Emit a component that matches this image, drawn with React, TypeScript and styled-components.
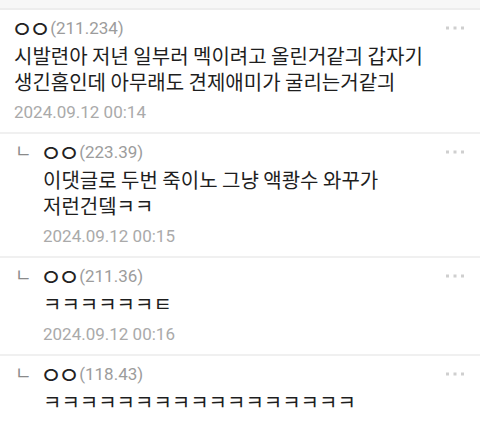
import styled, { createGlobalStyle } from "styled-components";

const GlobalStyle = createGlobalStyle`
  html, body {
    margin: 0;
    padding: 0;
    background: #ffffff;
  }
  body {
    font-family: Roboto, "Noto Sans CJK KR", sans-serif;
    color: #222222;
  }
`;

const TopBand = styled.div`
  height: 8px;
  background: #f7f7f7;
  border-bottom: 2px solid #ededed;
`;

const List = styled.div`
  display: flex;
  flex-direction: column;
`;

const Item = styled.div<{ $reply?: boolean }>`
  display: flex;
  padding: 6px 14px 8px ${({ $reply }) => ($reply ? "15px" : "14px")};
  border-bottom: 2px solid #f0f0f0;
`;

const ReplyMark = styled.div`
  width: 28px;
  height: 20px;
  flex-shrink: 0;
  font-family: "Noto Sans CJK KR", sans-serif;
  font-size: 18px;
  line-height: 20px;
  color: #8a8a8a;
`;

const Body = styled.div`
  flex: 1;
  display: flex;
  flex-direction: column;
`;

const Header = styled.div`
  display: flex;
  align-items: center;
  height: 24px;
`;

const Name = styled.div`
  height: 24px;
  font-family: "Noto Sans CJK KR", sans-serif;
  font-size: 24px;
  font-weight: 400;
  line-height: 24px;
  letter-spacing: -4px;
  margin-left: -3px;
  color: #222222;
`;

const Ip = styled.span`
  font-family: Roboto, sans-serif;
  font-size: 17px;
  color: #9c9c9c;
  margin-left: 3px;
`;

const More = styled.svg`
  margin-left: auto;
  margin-right: 2px;
`;

const Content = styled.div`
  margin-top: 3px;
  font-family: "Noto Sans CJK KR", sans-serif;
  font-size: 20px;
  line-height: 26px;
  color: #1e1e1e;
`;

const Date = styled.div`
  margin-top: 5px;
  font-family: Roboto, sans-serif;
  font-size: 17px;
  line-height: 24px;
  color: #aaaaaa;
`;

type Comment = {
  ip: string;
  lines: string[];
  date?: string;
  reply?: boolean;
};

const comments: Comment[] = [
  {
    ip: "211.234",
    lines: [
      "시발련아 저년 일부러 멕이려고 올린거같긔 갑자기",
      "생긴홈인데 아무래도 견제애미가 굴리는거같긔",
    ],
    date: "2024.09.12 00:14",
  },
  {
    ip: "223.39",
    lines: ["이댓글로 두번 죽이노 그냥 액쾅수 와꾸가", "저런건뎈ㅋㅋ"],
    date: "2024.09.12 00:15",
    reply: true,
  },
  {
    ip: "211.36",
    lines: ["ㅋㅋㅋㅋㅋㅋㅌ"],
    date: "2024.09.12 00:16",
    reply: true,
  },
  {
    ip: "118.43",
    lines: ["ㅋㅋㅋㅋㅋㅋㅋㅋㅋㅋㅋㅋㅋㅋㅋㅋㅋ"],
    reply: true,
  },
];

function MoreIcon() {
  return (
    <More width="18" height="4" viewBox="0 0 18 4">
      <rect x="0" y="0.5" width="3" height="3" fill="#cfcfcf" />
      <rect x="7.5" y="0.5" width="3" height="3" fill="#cfcfcf" />
      <rect x="15" y="0.5" width="3" height="3" fill="#cfcfcf" />
    </More>
  );
}

export default function App() {
  return (
    <>
      <GlobalStyle />
      <TopBand />
      <List>
        {comments.map((c) => (
          <Item key={c.ip} $reply={c.reply}>
            {c.reply && <ReplyMark>ㄴ</ReplyMark>}
            <Body>
              <Header>
                <Name>ㅇㅇ</Name>
                <Ip>({c.ip})</Ip>
                <MoreIcon />
              </Header>
              <Content>
                {c.lines.map((l) => (
                  <div key={l}>{l}</div>
                ))}
              </Content>
              {c.date && <Date>{c.date}</Date>}
            </Body>
          </Item>
        ))}
      </List>
    </>
  );
}
